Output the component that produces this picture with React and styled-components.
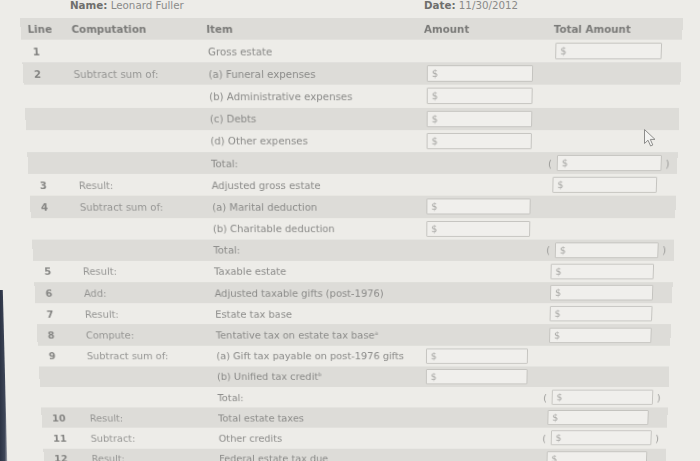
import React from 'react';
import styled, { createGlobalStyle } from 'styled-components';

const GlobalStyle = createGlobalStyle`
  html, body {
    margin: 0;
    padding: 0;
    background: #edece8;
  }
`;

const Page = styled.div`
  position: relative;
  width: 700px;
  height: 461px;
  overflow: hidden;
  background: #edece8;
  font-family: "DejaVu Sans", Verdana, sans-serif;
  font-size: 10.3px;
  color: #8a8a88;
`;

const Heading = styled.div`
  display: grid;
  grid-template-columns: 70px 354px auto;
  height: 18px;
  line-height: 11px;
  color: #8a8a88;
`;

const Label = styled.b`
  color: #6f6f6d;
`;

const Table = styled.div`
  margin-left: 20px;
  width: 663px;
  transform-origin: 385px 0;
  transform: perspective(1000px) rotateX(-8deg);
`;

const Row = styled.div`
  display: grid;
  grid-template-columns: 50px 136px 218px 130px 129px;
  align-items: center;
  height: ${(p) => (p.$head ? '22px' : '23.2px')};
  background: ${(p) => (p.$shade ? '#dddcd8' : 'transparent')};
`;

const HeadCell = styled.div`
  font-weight: bold;
  color: #7a7a78;
  padding-left: ${(p) => p.$pad || 0}px;
`;

const LineNo = styled.div`
  padding-left: 11px;
  font-weight: bold;
  color: #858583;
`;

const Comp = styled.div`
  padding-left: 1px;
  color: #959593;
`;

const Item = styled.div`
  padding-left: 1px;
  white-space: nowrap;
`;

const Sup = styled.sup`
  font-size: 6px;
  line-height: 0;
`;

const Cell = styled.div`
  display: flex;
  align-items: center;
  padding-left: ${(p) => p.$pad}px;
`;

const Field = styled.div`
  box-sizing: border-box;
  width: 107px;
  height: 17px;
  border: 1px solid #c4c3bf;
  border-radius: 1px;
  background: #f0efec;
  padding-left: 4px;
  line-height: 15px;
  font-size: 10px;
  color: #a9a9a6;
`;

const Paren = styled.span`
  color: #9a9a98;
  margin: ${(p) => (p.$open ? '0 5px 0 -5px' : '0 0 0 4px')};
`;

const Cursor = styled.svg`
  position: absolute;
  left: 643px;
  top: 128px;
`;

const Bezel = styled.div`
  position: absolute;
  left: 0;
  top: 290px;
  width: 8px;
  height: 171px;
  background: linear-gradient(to right, #2c3344 0, #3e4658 60%, #c9c8cc 100%);
  clip-path: polygon(0 0, 35% 0, 90% 100%, 0 100%);
`;

const rows = [
  { line: '1', item: 'Gross estate', total: 'plain' },
  { line: '2', comp: 'Subtract sum of:', item: '(a) Funeral expenses', amount: true },
  { item: '(b) Administrative expenses', amount: true },
  { item: '(c) Debts', amount: true },
  { item: '(d) Other expenses', amount: true },
  { item: 'Total:', total: 'paren' },
  { line: '3', comp: 'Result:', item: 'Adjusted gross estate', total: 'plain' },
  { line: '4', comp: 'Subtract sum of:', item: '(a) Marital deduction', amount: true },
  { item: '(b) Charitable deduction', amount: true },
  { item: 'Total:', total: 'paren' },
  { line: '5', comp: 'Result:', item: 'Taxable estate', total: 'plain' },
  { line: '6', comp: 'Add:', item: 'Adjusted taxable gifts (post-1976)', total: 'plain' },
  { line: '7', comp: 'Result:', item: 'Estate tax base', total: 'plain' },
  { line: '8', comp: 'Compute:', item: 'Tentative tax on estate tax base', sup: 'a', total: 'plain' },
  { line: '9', comp: 'Subtract sum of:', item: '(a) Gift tax payable on post-1976 gifts', amount: true },
  { item: '(b) Unified tax credit', sup: 'b', amount: true },
  { item: 'Total:', total: 'paren' },
  { line: '10', comp: 'Result:', item: 'Total estate taxes', total: 'plain' },
  { line: '11', comp: 'Subtract:', item: 'Other credits', total: 'paren' },
  { line: '12', comp: 'Result:', item: 'Federal estate tax due', total: 'plain' },
];

const TotalField = ({ kind }) => {
  if (!kind) return <Cell $pad={2} />;
  if (kind === 'paren') {
    return (
      <Cell $pad={2}>
        <Paren $open>(</Paren>
        <Field>$</Field>
        <Paren>)</Paren>
      </Cell>
    );
  }
  return (
    <Cell $pad={2}>
      <Field>$</Field>
    </Cell>
  );
};

export default function App() {
  return (
    <Page>
      <GlobalStyle />
      <Heading>
        <span />
        <span>
          <Label>Name:</Label> Leonard Fuller
        </span>
        <span>
          <Label>Date:</Label> 11/30/2012
        </span>
      </Heading>
      <Table>
        <Row $head $shade>
          <HeadCell $pad={7}>Line</HeadCell>
          <HeadCell $pad={1}>Computation</HeadCell>
          <HeadCell>Item</HeadCell>
          <HeadCell>Amount</HeadCell>
          <HeadCell>Total Amount</HeadCell>
        </Row>
        {rows.map((r, i) => (
          <Row key={i} $shade={i % 2 === 1}>
            <LineNo>{r.line}</LineNo>
            <Comp>{r.comp}</Comp>
            <Item>
              {r.item}
              {r.sup && <Sup>{r.sup}</Sup>}
            </Item>
            <Cell $pad={3}>{r.amount && <Field>$</Field>}</Cell>
            <TotalField kind={r.total} />
          </Row>
        ))}
      </Table>
      <Bezel />
      <Cursor width="14" height="20" viewBox="0 0 14 20">
        <path
          d="M1.5 1.5 L1.5 15.5 L5 12.2 L7.6 18 L9.8 17 L7.3 11.4 L12 11.4 Z"
          fill="#f4f4f2"
          stroke="#8d8d8b"
          strokeWidth="1"
          strokeLinejoin="round"
        />
      </Cursor>
    </Page>
  );
}
